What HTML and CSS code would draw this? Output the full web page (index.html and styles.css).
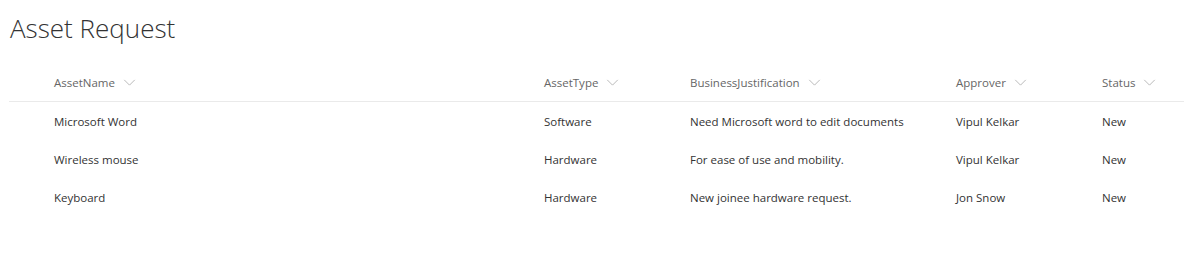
FILE: index.html
```html
<!DOCTYPE html>
<html>
<head>
<meta charset="utf-8">
<link rel="stylesheet" href="styles.css">
</head>
<body>
<h1 class="title">Asset Request</h1>
<div class="list">
  <div class="row head">
    <div class="cell">AssetName<svg class="chev" viewBox="0 0 14 8"><path d="M1 1l6 6 6-6"/></svg></div>
    <div class="cell">AssetType<svg class="chev" viewBox="0 0 14 8"><path d="M1 1l6 6 6-6"/></svg></div>
    <div class="cell">BusinessJustification<svg class="chev" viewBox="0 0 14 8"><path d="M1 1l6 6 6-6"/></svg></div>
    <div class="cell">Approver<svg class="chev" viewBox="0 0 14 8"><path d="M1 1l6 6 6-6"/></svg></div>
    <div class="cell">Status<svg class="chev" viewBox="0 0 14 8"><path d="M1 1l6 6 6-6"/></svg></div>
  </div>
  <div class="row">
    <div class="cell">Microsoft Word</div>
    <div class="cell">Software</div>
    <div class="cell">Need Microsoft word to edit documents</div>
    <div class="cell">Vipul Kelkar</div>
    <div class="cell">New</div>
  </div>
  <div class="row">
    <div class="cell">Wireless mouse</div>
    <div class="cell">Hardware</div>
    <div class="cell">For ease of use and mobility.</div>
    <div class="cell">Vipul Kelkar</div>
    <div class="cell">New</div>
  </div>
  <div class="row">
    <div class="cell">Keyboard</div>
    <div class="cell">Hardware</div>
    <div class="cell">New joinee hardware request.</div>
    <div class="cell">Jon Snow</div>
    <div class="cell">New</div>
  </div>
</div>
</body>
</html>
```
FILE: styles.css
```css
html, body {
  margin: 0;
  background: #ffffff;
  font-family: "Open Sans", "Noto Sans", sans-serif;
  color: #333333;
}
.title {
  margin: 0;
  padding: 10px 0 0 10px;
  font-size: 26px;
  font-weight: 300;
  line-height: 36px;
  color: #333333;
}
.list {
  margin: 18px 0 0 9px;
}
.row {
  display: grid;
  grid-template-columns: 45px 490px 146px 266px 146px 1fr;
  height: 38px;
  align-items: center;
  font-size: 11.5px;
  color: #333333;
}
.row::before {
  content: "";
}
.row.head {
  height: 37px;
  border-bottom: 1px solid #eaeaea;
  color: #666666;
}
.cell {
  display: flex;
  align-items: center;
  white-space: nowrap;
}
.chev {
  width: 13px;
  height: 7px;
  margin-left: 8px;
  fill: none;
  stroke: #b0b0b0;
  stroke-width: 1;
}
```
